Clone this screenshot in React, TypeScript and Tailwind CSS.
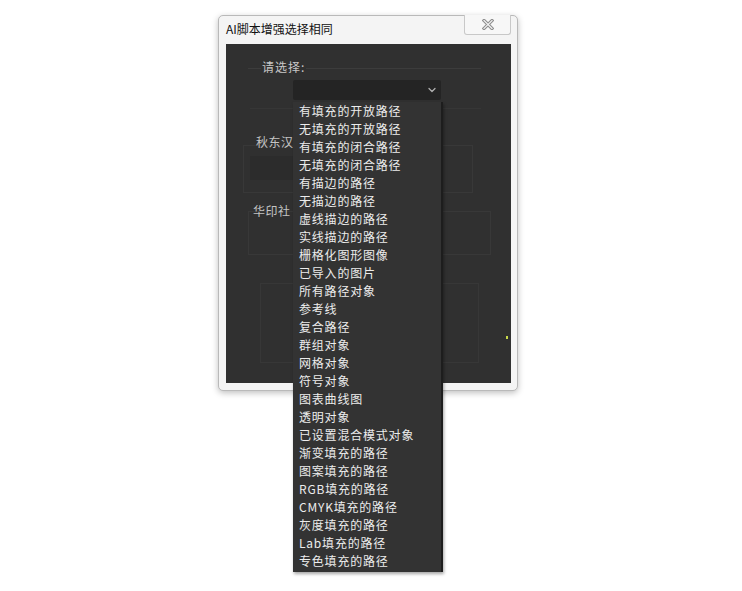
import { ChevronDown } from 'lucide-react';

const OPTIONS = [
  '有填充的开放路径', '无填充的开放路径', '有填充的闭合路径', '无填充的闭合路径',
  '有描边的路径', '无描边的路径', '虚线描边的路径', '实线描边的路径',
  '栅格化图形图像', '已导入的图片', '所有路径对象', '参考线', '复合路径',
  '群组对象', '网格对象', '符号对象', '图表曲线图', '透明对象',
  '已设置混合模式对象', '渐变填充的路径', '图案填充的路径', 'RGB填充的路径',
  'CMYK填充的路径', '灰度填充的路径', 'Lab填充的路径', '专色填充的路径',
];

const FONT = "font-['Noto_Sans_CJK_SC','Noto_Sans',sans-serif]";

function CloseGlyph() {
  return (
    <svg width="12" height="11" viewBox="0 0 12 11">
      <path d="M2 1.5 L10 9.5 M10 1.5 L2 9.5" stroke="#8c8c8c" strokeWidth="3.2" strokeLinecap="square" />
      <path d="M2 1.5 L10 9.5 M10 1.5 L2 9.5" stroke="#f2f2f2" strokeWidth="1.2" strokeLinecap="square" />
    </svg>
  );
}

export default function App() {
  return (
    <div className={`min-h-[591px] w-[742px] bg-white pl-[218px] pt-[15px] ${FONT}`}>
      {/* Window */}
      <div className="relative flex h-[376px] w-[300px] flex-col rounded-[5px] border border-[#b9b9b9] bg-[#f4f4f4] shadow-[0_2px_6px_rgba(0,0,0,0.25)]">
        {/* Title bar */}
        <div className="flex h-[28px] items-start justify-between pl-[7px] pr-[6px]">
          <span className="mt-[7px] text-[12px] leading-none text-[#111]">AI脚本增强选择相同</span>
          <div className="-mt-[1px] flex h-[20px] w-[47px] items-center justify-center rounded-b-[3px] border border-t-0 border-[#c8c8c8] bg-[#f7f7f7]">
            <CloseGlyph />
          </div>
        </div>

        {/* Body */}
        <div className="relative ml-[7px] mr-[6px] h-[339px] bg-[#303030]">
          {/* Group 1 */}
          <div className="ml-[22px] mr-[30px] mt-[24px] border-t border-[#3c3c3c]" />
          <span className="absolute left-[35px] top-[15px] bg-[#303030] px-[1px] text-[12px] leading-[16px] tracking-[1px] text-[#c8c8c8]">请选择:</span>

          {/* Select box */}
          <div className="ml-[67px] mt-[11px] flex h-[20px] w-[148px] items-center justify-end rounded-[2px] bg-[#242424] pr-[3px]">
            <ChevronDown className="h-[12px] w-[12px] text-[#b0b0b0]" strokeWidth={2.5} />
          </div>

          <div className="ml-[24px] mr-[30px] mt-[8px] border-t border-[#363636]" />

          {/* Group 2 */}
          <div className="relative ml-[17px] mr-[38px] mt-[36px] h-[48px] border border-[#383838]">
            <div className="ml-[6px] mt-[10px] h-[24px] w-[190px] bg-[#2c2c2c]" />
          </div>
          <span className="absolute left-[30px] top-[90px] text-[12px] leading-[16px] tracking-[0.5px] text-[#c4c4c4]">秋东汉</span>

          {/* Group 3 */}
          <div className="ml-[22px] mr-[20px] mt-[18px] h-[44px] border border-[#383838]" />
          <span className="absolute left-[27px] top-[159px] text-[12px] leading-[16px] tracking-[0.5px] text-[#c4c4c4]">华印社</span>

          <div className="ml-[34px] mr-[32px] mt-[28px] h-[80px] border border-[#373737]" />

          <div className="absolute left-[280px] top-[292px] h-[3px] w-[2px] bg-[#c8d84a]" />
        </div>

        {/* Dropdown list */}
        <div className="absolute left-[74px] top-[86px] w-[150px] border-r-2 border-[#1d1d1d] bg-[#333333] pb-[2px] shadow-[1px_2px_3px_rgba(0,0,0,0.35)]">
          {OPTIONS.map((o) => (
            <div key={o} className="h-[18px] whitespace-nowrap pl-[6px] text-[12px] leading-[18px] tracking-[0.8px] text-[#ececec]">
              {o}
            </div>
          ))}
        </div>
      </div>
    </div>
  );
}
